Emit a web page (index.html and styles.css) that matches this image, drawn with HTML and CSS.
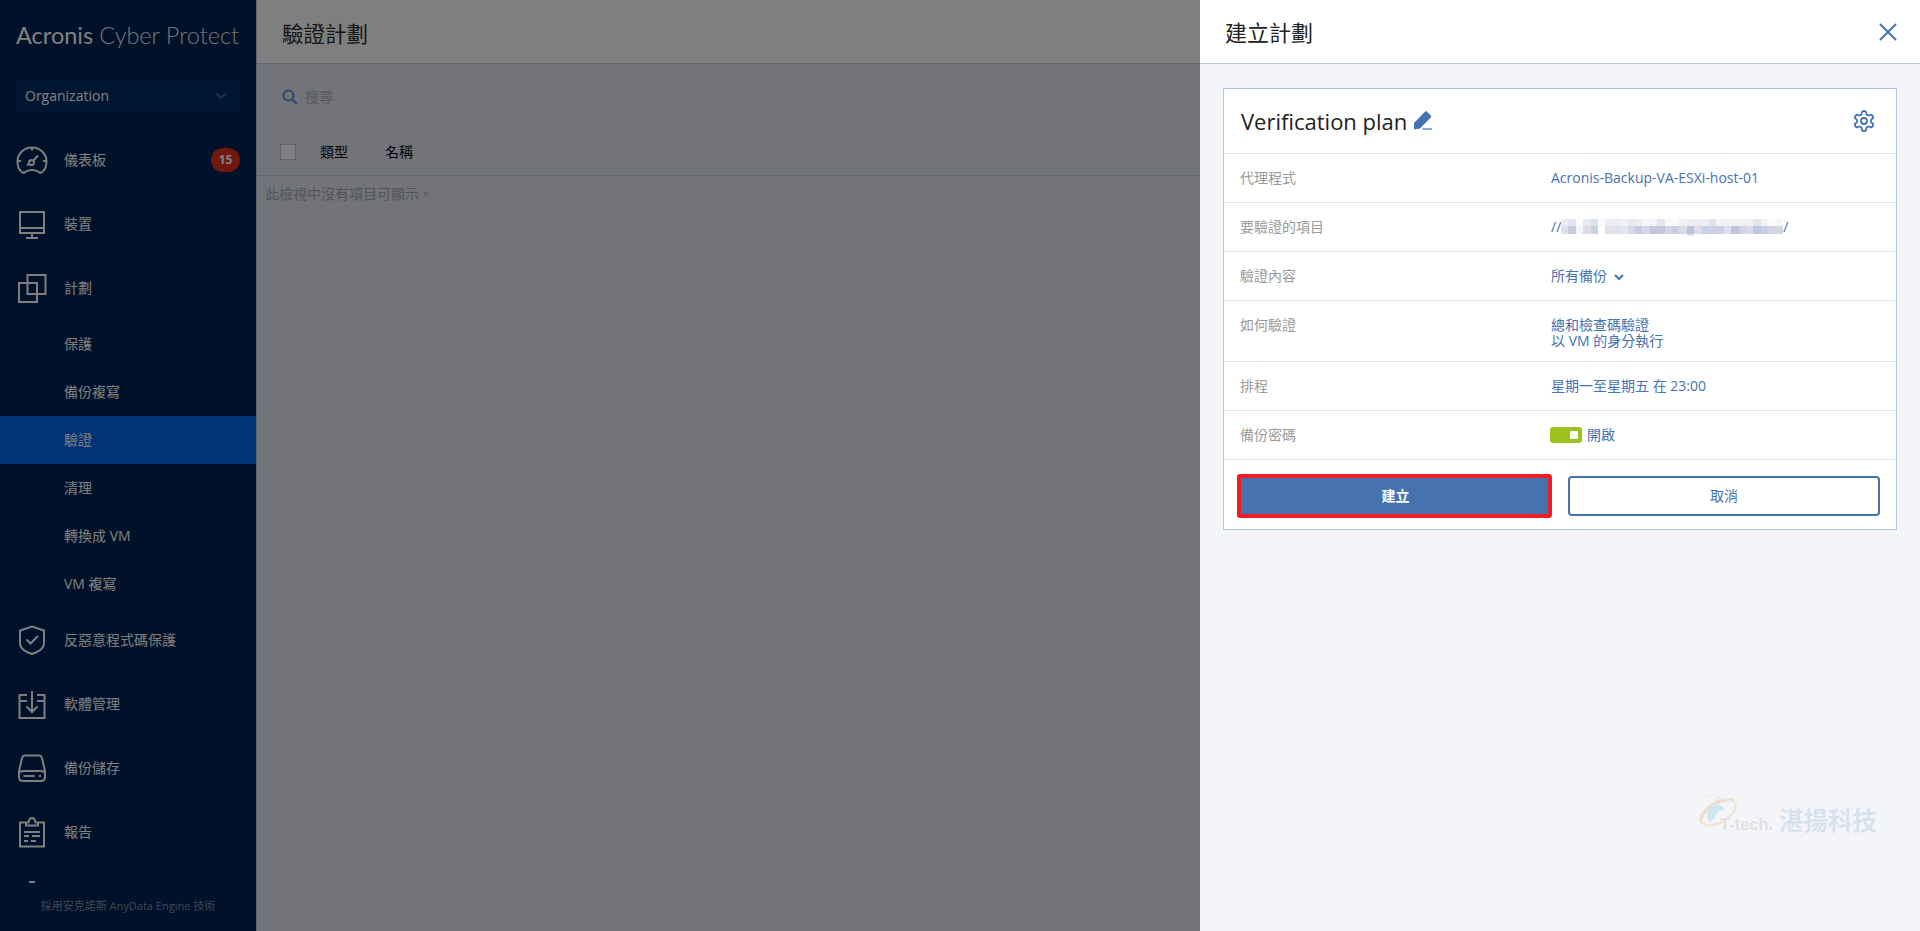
FILE: index.html
```html
<!DOCTYPE html>
<html lang="zh-Hant">
<head>
<meta charset="utf-8">
<title>驗證計劃</title>
<link rel="stylesheet" href="styles.css">
</head>
<body>
<div class="app">
  <aside class="sidebar">
    <div class="logo"><span class="logo-brand">Acronis</span> <span class="logo-product">Cyber Protect</span></div>
    <div class="org-select"><span>Organization</span>
      <svg class="org-chevron" width="12" height="8" viewBox="0 0 12 8"><path d="M1 1.500l5 4.500 5-4.500" fill="none" stroke="#2f66c0" stroke-width="2"/></svg>
    </div>
    <nav class="nav">
      <a class="nav-item">
        <svg class="nav-icon" viewBox="0 0 32 32"><path d="M6.500 28.500C3.500 26.500 1.500 22 1.500 17.500 1.500 9.500 8 3.500 16 3.500s14.500 6 14.500 14c0 4.500-2 9-5 11-1.500.8-2.500-.2-3.500-1-1.500-1-3.500-1.500-6-1.500s-4.500.5-6 1.500c-1 .8-2 1.800-3.500 1z" class="ic"/><path d="M16 3.500v3M2 17h3M27 17h3.500M12.500 21.500L11 20" class="ic"/><circle cx="15.500" cy="18.500" r="2.500" class="ic"/><path d="M17.500 16.500l4.500-5" class="ic"/></svg>
        <span>儀表板</span><b class="badge">15</b>
      </a>
      <a class="nav-item">
        <svg class="nav-icon" viewBox="0 0 32 32"><path d="M4 4h24v21H4zM4 20h24M16 25v4M10 30h12" class="ic"/></svg>
        <span>裝置</span>
      </a>
      <a class="nav-item">
        <svg class="nav-icon" viewBox="0 0 32 32"><path d="M11.500 3h18v19h-18zM3 11h18v19H3z" class="ic"/></svg>
        <span>計劃</span>
      </a>
      <a class="nav-sub">保護</a>
      <a class="nav-sub">備份複寫</a>
      <a class="nav-sub nav-sub-active">驗證</a>
      <a class="nav-sub">清理</a>
      <a class="nav-sub">轉換成 VM</a>
      <a class="nav-sub">VM 複寫</a>
      <a class="nav-item">
        <svg class="nav-icon" viewBox="0 0 32 32"><path d="M16 2.500l12 4v13c0 5-6 8.500-12 10.500-6-2-12-5.500-12-10.500v-13z" class="ic"/><path d="M10.500 15.500l4 4 7.500-7.500" class="ic"/></svg>
        <span>反惡意程式碼保護</span>
      </a>
      <a class="nav-item">
        <svg class="nav-icon" viewBox="0 0 32 32"><path d="M11 7H3.500v23h25V7H21M3.500 13H11M21 13h7.500M16 3v21M10.500 18.500L16 24l5.500-5.500" class="ic"/></svg>
        <span>軟體管理</span>
      </a>
      <a class="nav-item">
        <svg class="nav-icon" viewBox="0 0 32 32"><path d="M9 3.500h14c1.500 0 2.500 1 3 2.500l3 13v6c0 2.500-1.500 4-4 4H7c-2.500 0-4-1.500-4-4v-6l3-13c.5-1.500 1.500-2.500 3-2.500zM3 21c1-1.500 2-2 4-2h18c2 0 3 .5 4 2M7.500 24h11M23 24h2" class="ic"/></svg>
        <span>備份儲存</span>
      </a>
      <a class="nav-item">
        <svg class="nav-icon" viewBox="0 0 32 32"><path d="M10 6.500H4v24h24v-24h-6M10 9.500V6.500h2.500C13 3.500 14.500 2 16 2s3 1.500 3.500 4.500H22v3zM8 16h16M8 20h5M16 20h8M8 25h4M15 25h5" class="ic"/></svg>
        <span>報告</span>
      </a>
      <a class="nav-item">
        <svg class="nav-icon" viewBox="0 0 32 32"><path d="M13 2h6M16 2v26" class="ic"/></svg>
      </a>
    </nav>
    <div class="sidebar-foot">採用安克諾斯 AnyData Engine 技術</div>
  </aside>

  <main class="main">
    <header class="main-head">驗證計劃</header>
    <div class="search">
      <svg width="16" height="16" viewBox="0 0 16 16"><circle cx="6.500" cy="6.500" r="5" fill="none" stroke="#5f93e0" stroke-width="2.200"/><path d="M10.300 10.300l4.500 4.500" stroke="#5f93e0" stroke-width="2.400"/></svg>
      <span>搜尋</span>
    </div>
    <div class="table-head">
      <i class="check"></i>
      <span class="col-type">類型</span>
      <span>名稱</span>
    </div>
    <p class="empty">此檢視中沒有項目可顯示。</p>
  </main>
</div>

<div class="scrim"></div>

<section class="panel">
  <header class="panel-head">
    <h2>建立計劃</h2>
    <svg width="18" height="18" viewBox="0 0 18 18"><path d="M1 1l16 16M17 1L1 17" stroke="#4672b0" stroke-width="2" fill="none"/></svg>
  </header>
  <div class="panel-body">
    <div class="card">
      <div class="card-title">
        <span class="plan-name">Verification plan</span>
        <svg class="pencil" width="20" height="20" viewBox="0 0 20 20"><path d="M1 13L12 1.800c.6-.6 1.400-.6 2 0l3.800 3.700c.6.600.6 1.300 0 2L7 18.500 1 19.500z" fill="#4672b0"/><path d="M9.500 19h9.500" stroke="#4672b0" stroke-width="1.200"/></svg>
        <svg class="gear" width="24" height="24" viewBox="0 0 24 24"><path d="M12.220 2h-.44a2 2 0 0 0-2 2v.18a2 2 0 0 1-1 1.730l-.43.25a2 2 0 0 1-2 0l-.15-.08a2 2 0 0 0-2.730.73l-.22.38a2 2 0 0 0 .73 2.730l.15.1a2 2 0 0 1 1 1.720v.51a2 2 0 0 1-1 1.740l-.15.09a2 2 0 0 0-.73 2.730l.22.38a2 2 0 0 0 2.730.73l.15-.08a2 2 0 0 1 2 0l.43.25a2 2 0 0 1 1 1.730V20a2 2 0 0 0 2 2h.44a2 2 0 0 0 2-2v-.18a2 2 0 0 1 1-1.730l.43-.25a2 2 0 0 1 2 0l.15.08a2 2 0 0 0 2.730-.73l.22-.39a2 2 0 0 0-.73-2.730l-.15-.08a2 2 0 0 1-1-1.740v-.5a2 2 0 0 1 1-1.740l.15-.09a2 2 0 0 0 .73-2.730l-.22-.38a2 2 0 0 0-2.730-.73l-.15.08a2 2 0 0 1-2 0l-.43-.25a2 2 0 0 1-1-1.730V4a2 2 0 0 0-2-2z" fill="none" stroke="#4672b0" stroke-width="1.800"/><circle cx="12" cy="12" r="3" fill="none" stroke="#4672b0" stroke-width="1.800"/></svg>
      </div>
      <div class="row"><span class="label">代理程式</span><span class="value">Acronis-Backup-VA-ESXi-host-01</span></div>
      <div class="row"><span class="label">要驗證的項目</span><span class="value mosaic-value">//<svg class="mosaic" width="222" height="17" viewBox="0 0 30 2.300" preserveAspectRatio="none" shape-rendering="crispEdges">
        <g>
          <rect x="0" y="0" width="1" height="1" fill="#e9ecf3"/><rect x="1" y="0" width="1" height="1" fill="#e2e6f0"/><rect x="2" y="0" width="1" height="1" fill="#fafbfc"/><rect x="3" y="0" width="1" height="1" fill="#e9ebf1"/><rect x="4" y="0" width="1" height="1" fill="#dce2ed"/><rect x="5" y="0" width="1" height="1" fill="#fafbfc"/><rect x="6" y="0" width="1" height="1" fill="#eceef4"/><rect x="7" y="0" width="1" height="1" fill="#eceef4"/><rect x="8" y="0" width="1" height="1" fill="#f0f1f5"/><rect x="9" y="0" width="1" height="1" fill="#e6e9f0"/><rect x="10" y="0" width="1" height="1" fill="#eaedf1"/><rect x="11" y="0" width="1" height="1" fill="#f5f6f9"/><rect x="12" y="0" width="1" height="1" fill="#f3f4f8"/><rect x="13" y="0" width="1" height="1" fill="#e1e5ef"/><rect x="14" y="0" width="1" height="1" fill="#f7f8fa"/><rect x="15" y="0" width="1" height="1" fill="#fafafc"/><rect x="16" y="0" width="1" height="1" fill="#eef0f5"/><rect x="17" y="0" width="1" height="1" fill="#eceef3"/><rect x="18" y="0" width="1" height="1" fill="#eaecf2"/><rect x="19" y="0" width="1" height="1" fill="#eceef3"/><rect x="20" y="0" width="1" height="1" fill="#e0e4ee"/><rect x="21" y="0" width="1" height="1" fill="#f3f4f7"/><rect x="22" y="0" width="1" height="1" fill="#f0f2f5"/><rect x="23" y="0" width="1" height="1" fill="#eef0f4"/><rect x="24" y="0" width="1" height="1" fill="#f3eef2"/><rect x="25" y="0" width="1" height="1" fill="#f0f1f5"/><rect x="26" y="0" width="1" height="1" fill="#e2e6ee"/><rect x="27" y="0" width="1" height="1" fill="#f3f5f8"/><rect x="28" y="0" width="1" height="1" fill="#fafbfc"/><rect x="29" y="0" width="1" height="1" fill="#f5f6f9"/>
          <rect x="0" y="1" width="1" height="1" fill="#dde1ea"/><rect x="1" y="1" width="1" height="1" fill="#c8cce0"/><rect x="2" y="1" width="1" height="1" fill="#f5f8fb"/><rect x="3" y="1" width="1" height="1" fill="#dedde6"/><rect x="4" y="1" width="1" height="1" fill="#c8d3e5"/><rect x="5" y="1" width="1" height="1" fill="#ffffff"/><rect x="6" y="1" width="1" height="1" fill="#e0e3ef"/><rect x="7" y="1" width="1" height="1" fill="#e0e3ee"/><rect x="8" y="1" width="1" height="1" fill="#e3e5ee"/><rect x="9" y="1" width="1" height="1" fill="#d5d8e6"/><rect x="10" y="1" width="1" height="1" fill="#c8cbdd"/><rect x="11" y="1" width="1" height="1" fill="#d2d6e5"/><rect x="12" y="1" width="1" height="1" fill="#c3c7dc"/><rect x="13" y="1" width="1" height="1" fill="#c3c7dc"/><rect x="14" y="1" width="1" height="1" fill="#d2d7e5"/><rect x="15" y="1" width="1" height="1" fill="#c8cedf"/><rect x="16" y="1" width="1" height="1" fill="#d5dde5"/><rect x="17" y="1" width="1" height="1" fill="#bbc2da"/><rect x="18" y="1" width="1" height="1" fill="#dcdbe5"/><rect x="19" y="1" width="1" height="1" fill="#c3d2e3"/><rect x="20" y="1" width="1" height="1" fill="#d0d2e2"/><rect x="21" y="1" width="1" height="1" fill="#ccd0df"/><rect x="22" y="1" width="1" height="1" fill="#dbe2ed"/><rect x="23" y="1" width="1" height="1" fill="#c0c5da"/><rect x="24" y="1" width="1" height="1" fill="#d0d3e2"/><rect x="25" y="1" width="1" height="1" fill="#d9dbe6"/><rect x="26" y="1" width="1" height="1" fill="#bcc8de"/><rect x="27" y="1" width="1" height="1" fill="#c5cfe1"/><rect x="28" y="1" width="1" height="1" fill="#d2d5e2"/><rect x="29" y="1" width="1" height="1" fill="#cfd8e3"/>
          <rect x="17" y="2" width="1" height="0.300" fill="#e2e4ef"/>
        </g></svg>/</span></div>
      <div class="row"><span class="label">驗證內容</span><span class="value">所有備份<svg class="value-chevron" width="10" height="7" viewBox="0 0 10 7"><path d="M1 1l4 4 4-4" fill="none" stroke="#4672b0" stroke-width="2"/></svg></span></div>
      <div class="row row-tall"><span class="label">如何驗證</span><span class="value">總和檢查碼驗證<br>以 VM 的身分執行</span></div>
      <div class="row"><span class="label">排程</span><span class="value">星期一至星期五 在 23:00</span></div>
      <div class="row"><span class="label">備份密碼</span><span class="value toggle-value"><i class="toggle"><i class="knob"></i></i>開啟</span></div>
      <div class="actions">
        <button class="btn btn-primary">建立</button>
        <button class="btn btn-ghost">取消</button>
      </div>
    </div>
  </div>
  <div class="watermark">
    <svg class="wm-mark" width="44" height="38" viewBox="0 0 44 38"><path d="M4 29C0 24 8 14 18 9c7-3 14-4 18-2" fill="none" stroke="#f0dccd" stroke-width="3.500"/><path d="M3 27c3 6 12 5 21 1 9-5 16-13 13-20" fill="none" stroke="#f3e4d6" stroke-width="2.500"/><path d="M4 3c8-3 20-1 30 5" fill="none" stroke="#f3efe9" stroke-width="1.500"/><path d="M12 28c-5-5-3-15 4-17 6-2 10 2 11 7-3-3-7-2-8 1-1 4-3 7-7 9z" fill="#cfe6f3"/><circle cx="20" cy="6" r="2.500" fill="none" stroke="#cfe0ee"/></svg>
    <span class="wm-latin">T-tech.</span>
    <span class="wm-cjk">湛揚科技</span>
  </div>
</section>
</body>
</html>
```
FILE: styles.css
```css
* { box-sizing: border-box; }
html, body { margin: 0; height: 100%; overflow: hidden; }
body {
  font-family: "Open Sans", "Noto Sans CJK TC", sans-serif;
  font-size: 14px;
  line-height: 16px;
  color: #2b2b2b;
  background: #e6e9f0;
}
.app { display: flex; height: 931px; }

/* Sidebar */
.sidebar {
  width: 256px;
  flex: none;
  display: flex;
  flex-direction: column;
  background: #002252;
  color: #fff;
}
.logo { height: 80px; padding: 22px 0 0 16px; font-family: Lato, sans-serif; font-size: 23.500px; line-height: 26px; white-space: nowrap; }
.logo-brand { font-weight: 400; }
.logo-product { font-weight: 300; color: #e4e6ea; }
.org-select {
  margin: 0 16px;
  height: 32px;
  padding: 0 12px 0 8px;
  display: flex;
  align-items: center;
  justify-content: space-between;
  background: #002a62;
  border: 1px solid #002e6a;
  border-radius: 3px;
}
.nav { margin-top: 16px; height: 755px; flex: none; overflow: hidden; }
.nav-item { height: 64px; display: flex; align-items: center; padding: 0 16px; gap: 16px; }
.nav-icon { width: 32px; height: 32px; flex: none; }
.ic { fill: none; stroke: #fff; stroke-width: 2; }
.badge {
  margin-left: auto;
  width: 29px;
  height: 24px;
  border-radius: 12px;
  background: #e2311f;
  font-size: 12px;
  line-height: 24px;
  text-align: center;
}
.nav-sub { height: 48px; display: flex; align-items: center; padding-left: 64px; }
.nav-sub-active { background: #0066f0; }
.sidebar-foot { flex: 1; padding-top: 15px; text-align: center; font-size: 11px; color: #7d8ea8; white-space: nowrap; }

/* Main */
.main { flex: 1; min-width: 0; border-left: 1px solid #bcc8de; }
.main-head {
  height: 64px;
  padding: 22px 0 0 25px;
  background: #fff;
  border-bottom: 1px solid #c4d0e4;
  font-size: 21.500px;
  line-height: 24px;
}
.search { height: 64px; padding: 2px 0 0 25px; display: flex; align-items: center; gap: 7px; color: #b2b2b8; }
.table-head {
  height: 48px;
  padding-left: 23px;
  display: flex;
  align-items: center;
  border-bottom: 1px solid #c4d0e4;
  color: #000;
}
.check { width: 16px; height: 16px; background: #fff; border: 1px solid #b6c4dc; }
.col-type { margin: 0 37px 0 24px; }
.empty { margin: 0; padding: 10px 0 0 8px; color: #a8a8ae; letter-spacing: 0; }

/* Scrim and drawer */
.scrim { position: absolute; inset: 0; background: rgba(0, 0, 0, .5); }
.panel {
  position: absolute;
  top: 0;
  right: 0;
  bottom: 0;
  width: 720px;
  display: flex;
  flex-direction: column;
  background: #f4f5f8;
}
.panel-head {
  height: 64px;
  flex: none;
  padding: 0 23px 0 25px;
  display: flex;
  align-items: center;
  justify-content: space-between;
  background: #fff;
  border-bottom: 1px solid #b5c8e0;
}
.panel-head h2 { margin: 0; font-size: 22px; line-height: 24px; font-weight: 400; color: #222; }
.panel-body { padding: 24px 23px 0; }
.card { background: #fff; border: 1px solid #b0c6e2; }
.card-title { height: 64px; padding: 0 20px 0 17px; display: flex; align-items: center; }
.plan-name { font-size: 22px; line-height: 28px; color: #222; }
.pencil { margin: -2px 0 0 6px; }
.gear { margin-left: auto; }
.row {
  display: grid;
  grid-template-columns: 311px 1fr;
  padding: 16px 16px;
  border-top: 1px solid #e1e4e8;
}
.row-tall { padding-bottom: 12px; }
.label { color: #9a9a9a; }
.value { color: #4672b0; }
.mosaic-value { display: flex; align-items: center; height: 16px; }
.mosaic { flex: none; }
.value-chevron { margin-left: 7px; }
.toggle-value { display: flex; align-items: center; gap: 5px; margin-left: -1px; }
.toggle {
  width: 32px;
  height: 16px;
  border-radius: 3px;
  background: #9bc21f;
  display: flex;
  align-items: center;
  justify-content: flex-end;
  padding-right: 4px;
}
.knob { width: 8px; height: 8px; background: #fff; border-radius: 1px; }
.actions {
  display: grid;
  grid-template-columns: 315px 312px;
  gap: 16px;
  align-items: center;
  justify-content: space-between;
  padding: 14px 16px 11px 13px;
  border-top: 1px solid #e1e4e8;
  height: 70px;
}
.btn { font: inherit; border-radius: 3px; cursor: pointer; }
.btn-primary { height: 44px; padding-left: 8px; background: #4672b0; color: #fff; font-weight: 700; border: 4px solid #ee1c25; }
.btn-ghost { height: 40px; background: #fff; color: #4672b0; border: 2px solid #4672b0; border-radius: 4px; }

/* Watermark lying over the drawer */
.watermark { position: absolute; left: 498px; top: 794px; width: 200px; height: 42px; filter: blur(.4px); }
.wm-mark { position: absolute; left: 0; top: 0; }
.wm-latin { position: absolute; left: 22px; top: 20px; font: 700 16.500px/20px "Liberation Sans", sans-serif; color: #e0e0e0; }
.wm-cjk { position: absolute; left: 81px; top: 13px; font-size: 24.500px; line-height: 28px; font-weight: 700; color: #d6e3ef; white-space: nowrap; }
```
